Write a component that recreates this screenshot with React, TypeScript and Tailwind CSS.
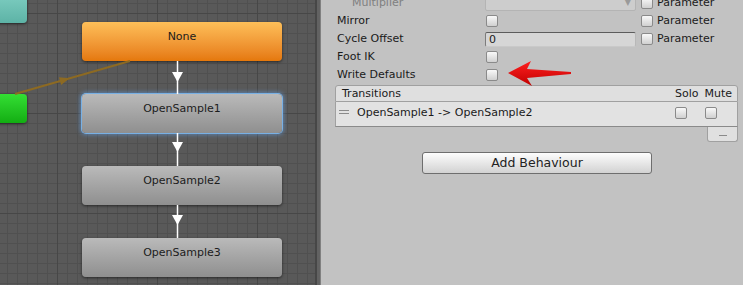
import React from "react";

function Toggle({ className = "" }: { className?: string }) {
  return (
    <div
      className={`w-[12px] h-[12px] shrink-0 rounded-[2px] border border-[#8a8a8a] bg-linear-to-b from-[#f9f9f9] to-[#d0d0d0] ${className}`}
    />
  );
}

function ParamToggle() {
  return (
    <div className="ml-[5px] flex items-center gap-[4px]">
      <Toggle />
      <span>Parameter</span>
    </div>
  );
}

function Node({
  label,
  top,
  selected = false,
  orange = false,
}: {
  label: string;
  top: string;
  selected?: boolean;
  orange?: boolean;
}) {
  const color = orange
    ? "from-[#fdbf58] to-[#e5780a]"
    : "from-[#bababa] to-[#8f8f8f]";
  const ring = selected
    ? "shadow-[0_0_0_1px_#78b0e4,0_0_4px_2px_rgba(100,160,230,0.55)]"
    : "shadow-[0_1px_3px_rgba(0,0,0,0.55)]";
  return (
    <div
      className={`absolute left-[82px] ${top} w-[200px] h-[39px] rounded-[4px] bg-linear-to-b ${color} ${ring} pt-[8px] text-center text-[11px] leading-[14px] text-[#1c1c1c]`}
    >
      {label}
    </div>
  );
}

export default function App() {
  return (
    <div className="relative flex w-[743px] h-[285px] overflow-hidden font-['DejaVu_Sans',sans-serif] text-[11px] leading-[14px] text-[#1a1a1a]">
      {/* Animator graph */}
      <div className="relative w-[315px] h-full shrink-0 overflow-hidden bg-[#595959]">
        <svg className="absolute inset-0" width="315" height="285">
          <defs>
            <pattern id="minor" width="10" height="10" x="7" y="3" patternUnits="userSpaceOnUse">
              <path d="M0 0.5H10M0.5 0V10" stroke="#505050" strokeWidth="1" fill="none" />
            </pattern>
            <pattern id="major" width="100" height="100" x="57" y="13" patternUnits="userSpaceOnUse">
              <path d="M0 0.5H100M0.5 0V100" stroke="#474747" strokeWidth="1" fill="none" />
            </pattern>
          </defs>
          <rect width="315" height="285" fill="url(#minor)" />
          <rect width="315" height="285" fill="url(#major)" />
        </svg>

        <div className="absolute left-[-60px] top-[-17px] w-[87px] h-[40px] rounded-[4px] bg-linear-to-b from-[#8ad8cc] to-[#5db3a6] shadow-[0_1px_3px_rgba(0,0,0,0.55)]" />
        <div className="absolute left-[-60px] top-[94px] w-[87px] h-[29px] rounded-[4px] bg-linear-to-b from-[#33df33] to-[#12ae12] shadow-[0_1px_3px_rgba(0,0,0,0.55)]" />

        <Node label="None" top="top-[22px]" orange />
        <Node label="OpenSample1" top="top-[94px]" selected />
        <Node label="OpenSample2" top="top-[166px]" />
        <Node label="OpenSample3" top="top-[238px]" />

        <svg className="absolute inset-0" width="315" height="285">
          <line x1="15" y1="94" x2="130" y2="61" stroke="#8d6a22" strokeWidth="2" />
          <polygon points="69.6,78.3 61.1,84.9 58.9,77.3" fill="#8d6a22" />
          <g fill="#ffffff" stroke="#ffffff">
            <line x1="177.5" y1="61" x2="177.5" y2="94" strokeWidth="1.5" />
            <line x1="177.5" y1="133" x2="177.5" y2="166" strokeWidth="1.5" />
            <line x1="177.5" y1="205" x2="177.5" y2="238" strokeWidth="1.5" />
            <polygon points="172,72 183,72 177.5,82" stroke="none" />
            <polygon points="172,142 183,142 177.5,152" stroke="none" />
            <polygon points="172,215 183,215 177.5,225" stroke="none" />
          </g>
        </svg>
      </div>

      {/* divider */}
      <div className="w-[2px] h-full bg-[#474747]" />
      <div className="w-[3px] h-full bg-[#626262]" />

      {/* Inspector */}
      <div className="flex-1 h-full border-l border-[#808080] bg-[#c2c2c2]">
        <div className="-mt-[6px]">
          <div className="flex items-center h-[18px]">
            <div className="w-[164px] pl-[31px] text-[#808080]">Multiplier</div>
            <div className="w-[151px] h-[15px] flex items-center justify-end rounded-[2px] border border-[#b4b4b4] bg-[#cdcdcd] pr-[4px]">
              <span className="text-[8px] text-[#9a9a9a]">▼</span>
            </div>
            <ParamToggle />
          </div>
          <div className="flex items-center h-[18px]">
            <div className="w-[164px] pl-[16px]">Mirror</div>
            <div className="w-[151px]">
              <Toggle className="ml-[1px]" />
            </div>
            <ParamToggle />
          </div>
          <div className="flex items-center h-[18px]">
            <div className="w-[164px] pl-[16px]">Cycle Offset</div>
            <div className="w-[151px] h-[15px] rounded-[2px] border border-t-[#5c5c5c] border-l-[#7c7c7c] border-r-[#b8b8b8] border-b-[#c9c9c9] bg-[#d6d6d6] pl-[3px] leading-[13px]">
              0
            </div>
            <ParamToggle />
          </div>
          <div className="flex items-center h-[18px]">
            <div className="w-[164px] pl-[16px]">Foot IK</div>
            <Toggle className="ml-[1px]" />
          </div>
          <div className="flex items-center h-[18px]">
            <div className="w-[164px] pl-[16px]">Write Defaults</div>
            <Toggle className="ml-[1px]" />
          </div>
        </div>

        {/* Transitions list */}
        <div className="ml-[14px] mt-[1px] w-[403px]">
          <div className="h-[17px] flex items-center justify-between rounded-t-[3px] border border-[#a0a0a0] bg-[#dfdfdf] pl-[6px] pr-[5px]">
            <span>Transitions</span>
            <div className="flex gap-[6px]">
              <span>Solo</span>
              <span>Mute</span>
            </div>
          </div>
          <div className="h-[25px] flex items-start pt-[4px] border-x border-b border-x-[#a0a0a0] border-b-[#8a8a8a] bg-[#e2e2e2]">
            <div className="ml-[3px] mt-[4px] flex flex-col gap-[2px]">
              <div className="w-[10px] h-[1px] bg-[#8a8a8a]" />
              <div className="w-[10px] h-[1px] bg-[#8a8a8a]" />
            </div>
            <span className="ml-[8px]">OpenSample1 -&gt; OpenSample2</span>
            <Toggle className="ml-auto mt-[1px]" />
            <Toggle className="ml-[18px] mr-[20px] mt-[1px]" />
          </div>
          <div className="flex justify-end">
            <div className="w-[31px] h-[15px] flex items-center justify-center rounded-b-[3px] border-x border-b border-[#a0a0a0] bg-[#e0e0e0]">
              <div className="w-[8px] h-[1px] bg-[#8a8a8a] mt-[3px]" />
            </div>
          </div>
        </div>

        <button className="ml-[101px] mt-[10px] w-[230px] h-[22px] rounded-[3px] border border-[#6e6e6e] bg-linear-to-b from-[#fdfdfd] to-[#d2d2d2] text-[12.5px] text-[#222222]">
          Add Behaviour
        </button>
      </div>

      {/* red annotation arrow */}
      <svg className="absolute left-[505px] top-[58px]" width="70" height="30">
        <defs>
          <linearGradient id="red" x1="0" y1="0" x2="0" y2="1">
            <stop offset="0" stopColor="#ff2020" />
            <stop offset="1" stopColor="#c00000" />
          </linearGradient>
        </defs>
        <polygon points="3,15 26,3 22,11 66,14 66,16 22,20 27,28" fill="url(#red)" />
      </svg>
    </div>
  );
}
